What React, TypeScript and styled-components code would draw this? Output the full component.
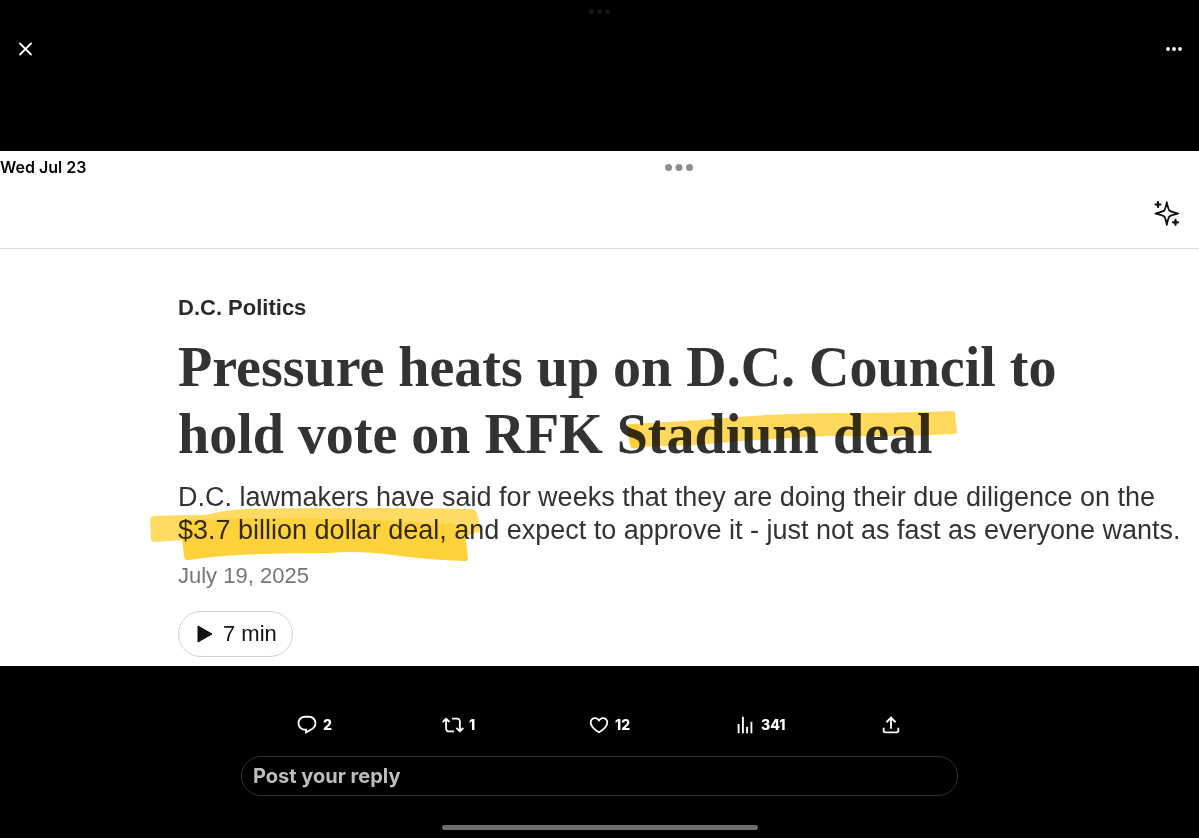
import React from "react";
import styled, { createGlobalStyle } from "styled-components";

const GlobalStyle = createGlobalStyle`
  * { box-sizing: border-box; }
  body { margin: 0; background: #000; }
  button, input { font: inherit; }
`;

const Viewer = styled.div`
  min-height: 100vh;
  display: flex;
  flex-direction: column;
  background: #000;
  color: #fff;
  font-family: Inter, "Liberation Sans", sans-serif;
`;

const TopBar = styled.header`
  height: 151px;
  padding: 9px 14px 0;
`;

const Grip = styled.div`
  display: flex;
  justify-content: center;
  height: 28px;
`;

const TopActions = styled.div`
  display: flex;
  justify-content: space-between;
`;

const IconButton = styled.button`
  display: flex;
  padding: 0;
  border: 0;
  background: none;
  color: inherit;
  cursor: pointer;
`;

const Media = styled.main`
  background: #fff;
  color: #2d2d2d;
  overflow: hidden;
`;

const StatusBar = styled.div`
  display: grid;
  grid-template-columns: 1fr auto 506px;
  align-items: center;
  height: 32px;
  color: #000;
  font-size: 16px;
  font-weight: 600;
`;

const SiteBar = styled.div`
  display: flex;
  justify-content: flex-end;
  height: 66px;
  padding: 16px 18px 0;
  border-bottom: 1px solid #dcdcdc;
  color: #111;
`;

const Article = styled.article`
  padding: 43px 0 9px 178px;
  font-family: "Liberation Sans", sans-serif;
  white-space: nowrap;
`;

const Kicker = styled.a`
  display: block;
  color: #2a2a2a;
  font-size: 22px;
  font-weight: 700;
  line-height: 32px;
  text-decoration: none;
`;

const Headline = styled.h1`
  margin: 10px 0 0;
  color: #333;
  font-family: "Liberation Serif", serif;
  font-size: 56px;
  font-weight: 700;
  line-height: 67px;
`;

const Summary = styled.p`
  margin: 13px 0 0;
  color: #333;
  font-size: 27px;
  line-height: 33px;
`;

const Marked = styled.span`
  position: relative;
  display: inline-block;
`;

const Marker = styled.svg`
  position: absolute;
  mix-blend-mode: multiply;
  pointer-events: none;
`;

const TitleMarker = styled(Marker)`
  left: 10px;
  top: 8px;
`;

const PriceMarker = styled(Marker)`
  left: -30px;
  top: -8px;
`;

const Published = styled.time`
  display: block;
  margin-top: 13px;
  color: #767676;
  font-size: 22px;
  line-height: 32px;
`;

const Listen = styled.button`
  display: flex;
  align-items: center;
  gap: 10px;
  height: 46px;
  margin-top: 19px;
  padding: 0 15px 0 18px;
  border: 1px solid #d0d0d0;
  border-radius: 23px;
  background: #fff;
  color: #111;
  font-size: 22px;
`;

const Footer = styled.footer`
  flex: 1;
  display: flex;
  flex-direction: column;
  align-items: center;
  padding: 47px 24px 8px;
`;

const Actions = styled.div`
  display: grid;
  grid-template-columns: repeat(5, 146px);
  width: 100%;
  max-width: 717px;
  padding-left: 55px;
`;

const Action = styled.button`
  display: flex;
  align-items: center;
  gap: 5px;
  height: 23px;
  padding: 0;
  border: 0;
  background: none;
  color: #fff;
  font-size: 14px;
  font-weight: 800;
  cursor: pointer;
`;

const Reply = styled.input`
  width: 100%;
  max-width: 717px;
  height: 40px;
  margin-top: 20px;
  padding: 0 11px;
  border: 1px solid #2f2f2f;
  border-radius: 20px;
  outline: 0;
  background: #000;
  color: #fff;
  font-size: 20px;
  font-weight: 700;
  &::placeholder { color: #bdbdbd; opacity: 1; }
`;

const HomeIndicator = styled.div`
  width: 316px;
  height: 5px;
  margin-top: auto;
  border-radius: 3px;
  background: #6c6c6c;
`;

function Dots({ size, pitch, color }: { size: number; pitch: number; color: string }) {
  const w = Math.ceil(pitch * 2 + size);
  return (
    <svg width={w} height={size} viewBox={`0 0 ${w} ${size}`} fill={color} aria-hidden="true">
      {[0, 1, 2].map((i) => (
        <circle key={i} cx={w / 2 + pitch * (i - 1)} cy={size / 2} r={size / 2} />
      ))}
    </svg>
  );
}

const actions = [
  {
    label: "Reply",
    count: "2",
    d: "M1.751 10c0-4.42 3.584-8 8.005-8h4.366c4.49 0 8.129 3.64 8.129 8.13 0 2.96-1.607 5.68-4.196 7.11l-8.054 4.46v-3.69h-.067c-4.49.1-8.183-3.51-8.183-8.01zm8.005-6c-3.317 0-6.005 2.69-6.005 6 0 3.37 2.77 6.08 6.138 6.01l.351-.01h1.761v2.3l5.087-2.81c1.951-1.08 3.163-3.13 3.163-5.36 0-3.39-2.744-6.13-6.129-6.13H9.756z",
  },
  {
    label: "Repost",
    count: "1",
    d: "M4.5 3.88l4.432 4.14-1.364 1.46L5.5 7.55V16c0 1.1.896 2 2 2H13v2H7.5c-2.209 0-4-1.79-4-4V7.55L1.432 9.48.068 8.02 4.5 3.88zM16.5 6H11V4h5.5c2.209 0 4 1.79 4 4v8.45l2.068-1.93 1.364 1.46-4.432 4.14-4.432-4.14 1.364-1.46 2.068 1.93V8c0-1.1-.896-2-2-2z",
  },
  {
    label: "Like",
    count: "12",
    d: "M16.697 5.5c-1.222-.06-2.679.51-3.89 2.16l-.805 1.09-.806-1.09C9.984 6.01 8.526 5.44 7.304 5.5c-1.243.07-2.349.78-2.91 1.91-.552 1.12-.633 2.78.479 4.82 1.074 1.97 3.257 4.27 7.129 6.61 3.87-2.34 6.052-4.64 7.126-6.61 1.111-2.04 1.03-3.7.477-4.82-.561-1.13-1.666-1.84-2.908-1.91zm4.187 7.69c-1.351 2.48-4.001 5.12-8.379 7.67l-.503.3-.504-.3c-4.379-2.55-7.029-5.19-8.382-7.67-1.36-2.5-1.41-4.86-.514-6.67.887-1.79 2.647-2.91 4.601-3.01 1.651-.09 3.368.56 4.798 2.01 1.429-1.45 3.146-2.1 4.796-2.01 1.954.1 3.714 1.22 4.601 3.01.896 1.81.846 4.17-.514 6.67z",
  },
  {
    label: "Views",
    count: "341",
    d: "M8.75 21V3h2v18h-2zM18 21V8.500h2V21h-2zM4 21V11h2v10H4zm9.250 0v-7h2v7h-2z",
  },
  {
    label: "Share",
    count: "",
    d: "M12 2.59l5.7 5.7-1.41 1.42L13 6.41V16h-2V6.41l-3.3 3.3-1.41-1.42L12 2.59zM21 15l-.02 3.51c0 1.38-1.12 2.49-2.5 2.49H5.5C4.11 21 3 19.88 3 18.5V15h2v3.5c0 .28.22.5.5.5h12.98c.28 0 .5-.22.5-.5L19 15h2z",
  },
];

export default function App() {
  return (
    <Viewer>
      <GlobalStyle />
      <TopBar>
        <Grip>
          <Dots size={5} pitch={8} color="#161616" />
        </Grip>
        <TopActions>
          <IconButton aria-label="Close">
            <svg width="23" height="23" viewBox="0 0 23 23" stroke="#fff" strokeWidth="1.8" strokeLinecap="round">
              <path d="M6 6.500l11 11M17 6.500l-11 11" />
            </svg>
          </IconButton>
          <IconButton aria-label="More">
            <svg width="23" height="23" viewBox="0 0 23 23" fill="#fff">
              <circle cx="6" cy="12" r="1.9" />
              <circle cx="12" cy="12" r="1.9" />
              <circle cx="18" cy="12" r="1.9" />
            </svg>
          </IconButton>
        </TopActions>
      </TopBar>

      <Media>
        <StatusBar>
          <span>Wed Jul 23</span>
          <Dots size={7} pitch={10.5} color="#8e8e8e" />
        </StatusBar>
        <SiteBar>
          <IconButton aria-label="Ask AI">
            <svg width="28" height="28" viewBox="0 0 28 28" fill="none" stroke="currentColor" strokeLinejoin="round" strokeLinecap="round">
              <path
                strokeWidth="1.8"
                d="M13.800 3.200C14.900 8.400 15.300 10.400 16.400 11.500C17.600 12.700 20 13.200 25.200 14.500C20 15.800 17.600 16.300 16.400 17.500C15.300 18.600 14.900 20.600 13.800 25.800C12.700 20.600 12.300 18.600 11.200 17.500C10 16.300 7.600 15.800 2.400 14.500C7.600 13.200 10 12.700 11.200 11.500C12.300 10.400 12.700 8.400 13.800 3.200Z"
              />
              <path strokeWidth="2.2" d="M5 3v5M2.500 5.500h5M22.500 20.800v5M20 23.300h5" />
            </svg>
          </IconButton>
        </SiteBar>

        <Article>
          <Kicker href="#politics">D.C. Politics</Kicker>
          <Headline>
            Pressure heats up on D.C. Council to
            <br />
            hold vote on RFK{" "}
            <Marked>
              Stadium deal
              <TitleMarker width="332" height="44" viewBox="627 408 332 44" aria-hidden="true">
                <path
                  fill="#ffd95c"
                  d="M629 423Q668 421 700 419Q760 413 830 412Q900 412 952 410Q955 410 955 413L957 431Q957 433 953 433Q900 436 830 435Q740 439 700 444Q660 445 640 446Q634 449 631 446Q628 438 627 426Q627 423 629 423Z"
                />
                <path fill="#ffc81e" opacity=".6" d="M629 424L638 424Q642 436 638 446Q634 449 631 446Q628 438 629 424Z" />
              </TitleMarker>
            </Marked>
          </Headline>
          <Summary>
            D.C. lawmakers have said for weeks that they are doing their due diligence on the
            <br />
            <Marked>
              $3.7 billion dollar deal,
              <PriceMarker width="336" height="58" viewBox="148 506 336 58" aria-hidden="true">
                <path
                  fill="#ffdb63"
                  d="M150 520Q150 517 154 516Q180 515 205 515Q225 510 245 509Q350 507 471 509Q475 509 477 513L481 529Q481 533 474 533Q462 538 462 549Q400 544 350 546Q270 544 184 543L183 540L154 542Q151 542 151 538Z"
                />
                <path
                  fill="#ffd23c"
                  d="M179 520Q300 514 464 525L468 558Q468 562 464 561Q430 560 400 556Q360 550 330 553Q230 553 190 560Q185 561 184 557Q183 543 179 520Z"
                />
              </PriceMarker>
            </Marked>{" "}
            and expect to approve it - just not as fast as everyone wants.
          </Summary>
          <Published dateTime="2025-07-19">July 19, 2025</Published>
          <Listen>
            <svg width="16" height="18" viewBox="0 0 16 18" fill="currentColor" aria-hidden="true">
              <path d="M1 1L15 9L1 17Z" stroke="currentColor" strokeLinejoin="round" />
            </svg>
            7 min
          </Listen>
        </Article>
      </Media>

      <Footer>
        <Actions>
          {actions.map((a) => (
            <Action key={a.label} aria-label={a.label}>
              <svg width="22" height="22" viewBox="0 0 24 24" fill="currentColor" aria-hidden="true">
                <path d={a.d} />
              </svg>
              {a.count && <span>{a.count}</span>}
            </Action>
          ))}
        </Actions>
        <Reply aria-label="Post your reply" placeholder="Post your reply" />
        <HomeIndicator />
      </Footer>
    </Viewer>
  );
}
